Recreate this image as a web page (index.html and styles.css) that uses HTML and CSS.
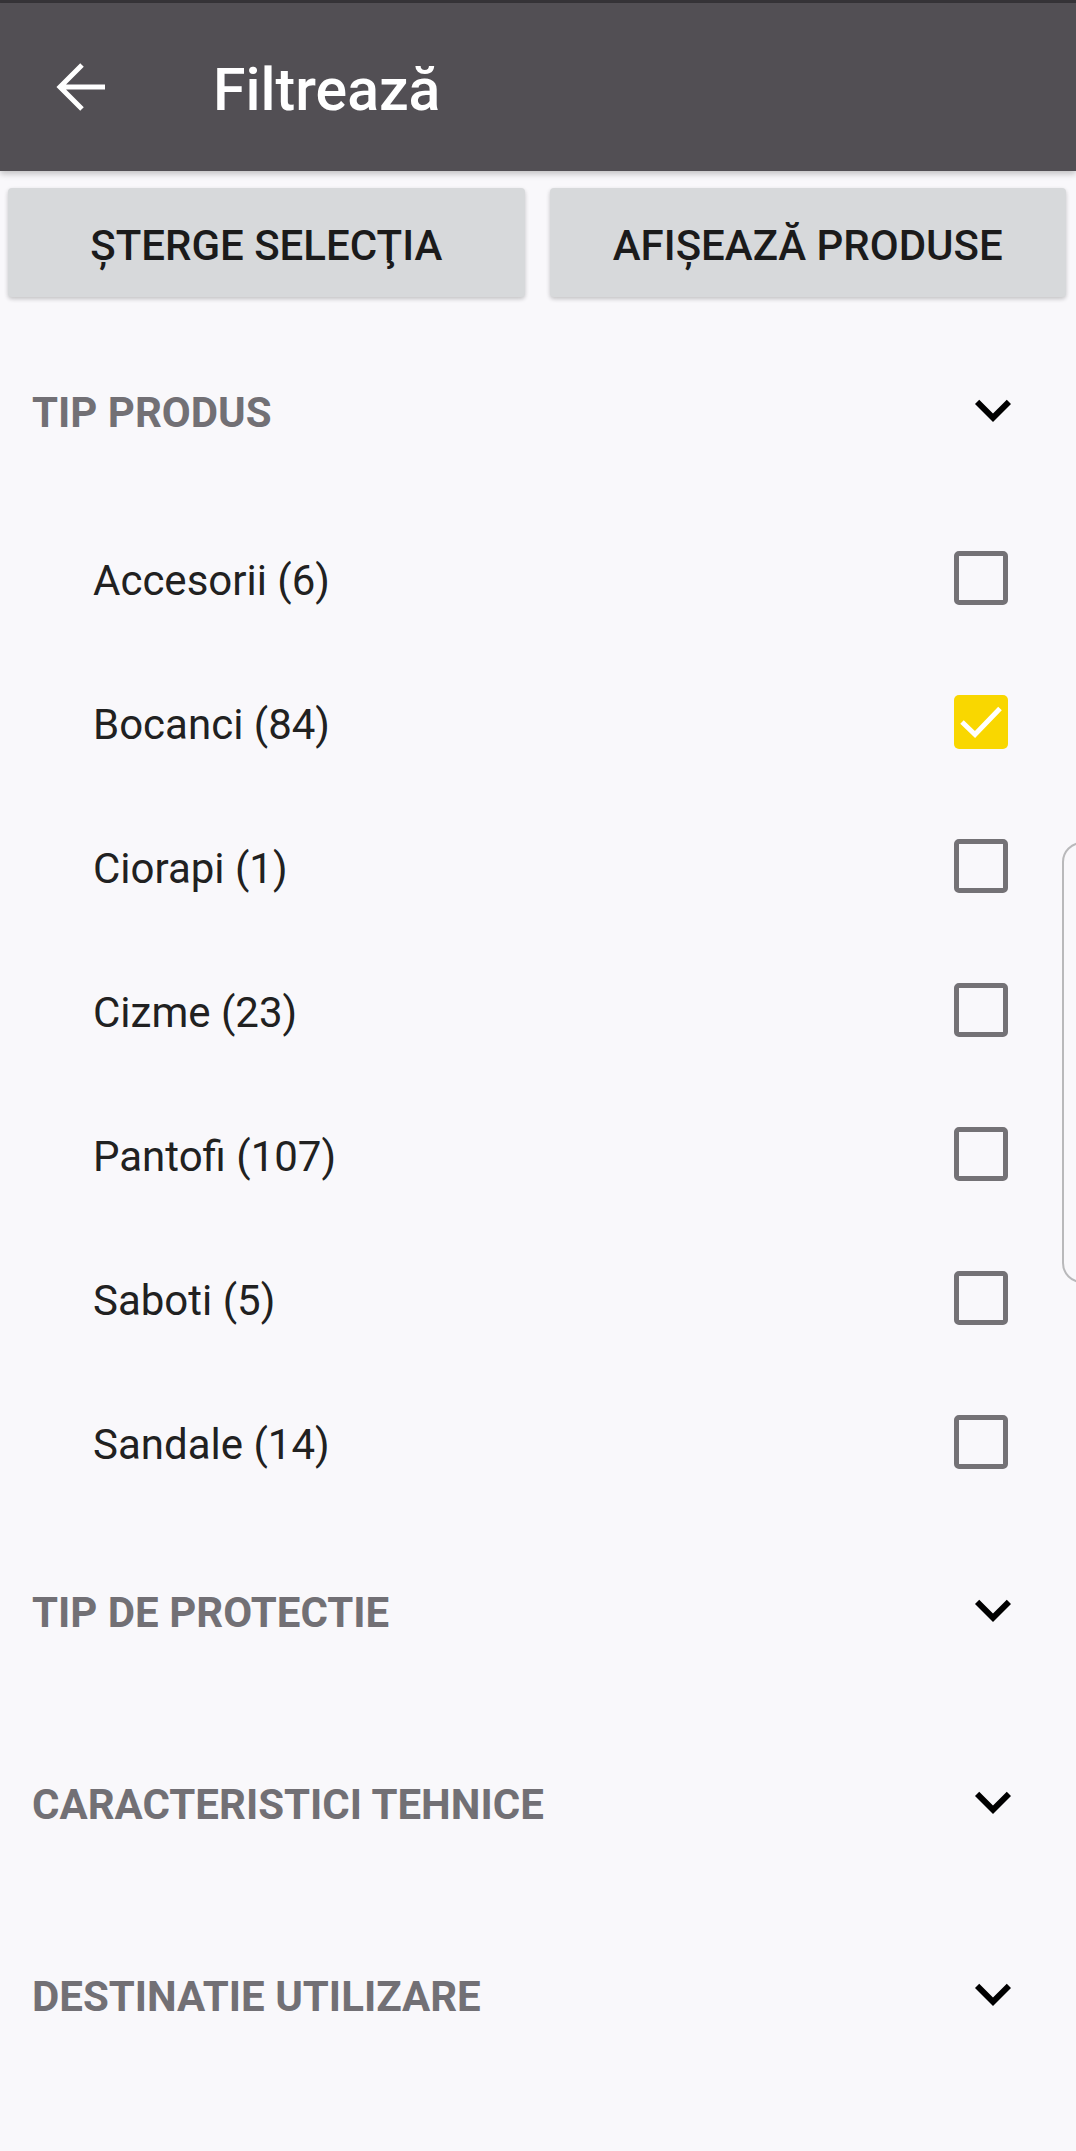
FILE: index.html
```html
<!DOCTYPE html>
<html lang="ro">
<head>
<meta charset="utf-8">
<title>Filtrează</title>
<link rel="stylesheet" href="styles.css">
</head>
<body>
<div class="statusline"></div>
<header class="appbar">
  <button class="back" aria-label="Înapoi">
    <svg width="50" height="50" viewBox="0 0 50 50"><path d="M49 25H4M26 3L4 25L26 47" fill="none" stroke="#fff" stroke-width="5"/></svg>
  </button>
  <h1 class="title">Filtrează</h1>
</header>

<div class="actions">
  <button class="btn">ŞTERGE SELECŢIA</button>
  <button class="btn">AFIŞEAZĂ PRODUSE</button>
</div>

<main class="groups">
  <section class="group">
    <div class="group-head"><span class="group-title">TIP PRODUS</span>
      <svg class="chev" width="72" height="72" viewBox="0 0 24 24"><path d="M16.59 8.59L12 13.17 7.41 8.59 6 10l6 6 6-6z" fill="#000"/></svg></div>
    <ul class="options">
      <li class="option"><span class="label">Accesorii (6)</span><span class="cb"></span></li>
      <li class="option"><span class="label">Bocanci (84)</span><span class="cb checked"><svg width="54" height="54" viewBox="0 0 54 54"><path d="M8 27L21 39.5L46 13.5" fill="none" stroke="#fff" stroke-width="5"/></svg></span></li>
      <li class="option"><span class="label">Ciorapi (1)</span><span class="cb"></span></li>
      <li class="option"><span class="label">Cizme (23)</span><span class="cb"></span></li>
      <li class="option"><span class="label">Pantofi (107)</span><span class="cb"></span></li>
      <li class="option"><span class="label">Saboti (5)</span><span class="cb"></span></li>
      <li class="option"><span class="label">Sandale (14)</span><span class="cb"></span></li>
    </ul>
  </section>
  <section class="group">
    <div class="group-head"><span class="group-title">TIP DE PROTECTIE</span>
      <svg class="chev" width="72" height="72" viewBox="0 0 24 24"><path d="M16.59 8.59L12 13.17 7.41 8.59 6 10l6 6 6-6z" fill="#000"/></svg></div>
  </section>
  <section class="group">
    <div class="group-head"><span class="group-title">CARACTERISTICI TEHNICE</span>
      <svg class="chev" width="72" height="72" viewBox="0 0 24 24"><path d="M16.59 8.59L12 13.17 7.41 8.59 6 10l6 6 6-6z" fill="#000"/></svg></div>
  </section>
  <section class="group">
    <div class="group-head"><span class="group-title">DESTINATIE UTILIZARE</span>
      <svg class="chev" width="72" height="72" viewBox="0 0 24 24"><path d="M16.59 8.59L12 13.17 7.41 8.59 6 10l6 6 6-6z" fill="#000"/></svg></div>
  </section>
</main>

<div class="edge-handle"></div>
</body>
</html>
```

FILE: styles.css
```css
* { box-sizing: border-box; }

html, body {
  margin: 0;
  padding: 0;
}

body {
  background: #f9f8fb;
  font-family: Roboto, "Liberation Sans", Arial, sans-serif;
  width: 1076px;
  min-height: 2151px;
  position: relative;
  overflow: hidden;
}

.statusline {
  height: 3px;
  background: #363438;
}

.appbar {
  height: 168px;
  background: #524f54;
  display: flex;
  align-items: center;
  box-shadow: 0 3px 6px rgba(0, 0, 0, 0.22);
  position: relative;
  z-index: 2;
}

.back {
  background: none;
  border: 0;
  padding: 0;
  margin-left: 56px;
  width: 50px;
  height: 50px;
  display: flex;
}

.title {
  margin: 0 0 0 107px;
  color: #fff;
  font-size: 59px;
  font-weight: 500;
  line-height: 1;
  padding-top: 4px;
}

.actions {
  display: flex;
  gap: 25px;
  padding: 17px 10px 0 8px;
}

.btn {
  flex: 1;
  height: 109px;
  border: 0;
  border-radius: 4px;
  background: #d7d9db;
  color: #1b1b1b;
  font-family: Roboto, "Liberation Sans", Arial, sans-serif;
  font-size: 42px;
  font-weight: 500;
  box-shadow: 0 2px 4px rgba(0, 0, 0, 0.22);
  padding: 5px 0 0;
}

.groups {
  margin-top: 17px;
}

.group-head {
  height: 192px;
  display: flex;
  align-items: center;
  justify-content: space-between;
  padding: 0 47px 0 32px;
}

.group-title {
  font-size: 42px;
  font-weight: 700;
  color: #727075;
  padding-top: 5px;
}

.chev {
  display: block;
}

.options {
  list-style: none;
  margin: 0;
  padding: 0;
}

.option {
  height: 144px;
  display: flex;
  align-items: center;
  justify-content: space-between;
  padding: 0 68px 0 93px;
  font-size: 42px;
  color: #212121;
}

.label {
  padding-top: 5px;
}

.cb {
  width: 54px;
  height: 54px;
  border: 5px solid #747276;
  border-radius: 5px;
  display: block;
}

.cb.checked {
  border: 0;
  background: #f9d700;
}

.cb svg {
  display: block;
}

.edge-handle {
  position: absolute;
  left: 1062px;
  top: 842px;
  width: 40px;
  height: 441px;
  border: 2px solid #b9b9bb;
  border-radius: 24px;
}
```
